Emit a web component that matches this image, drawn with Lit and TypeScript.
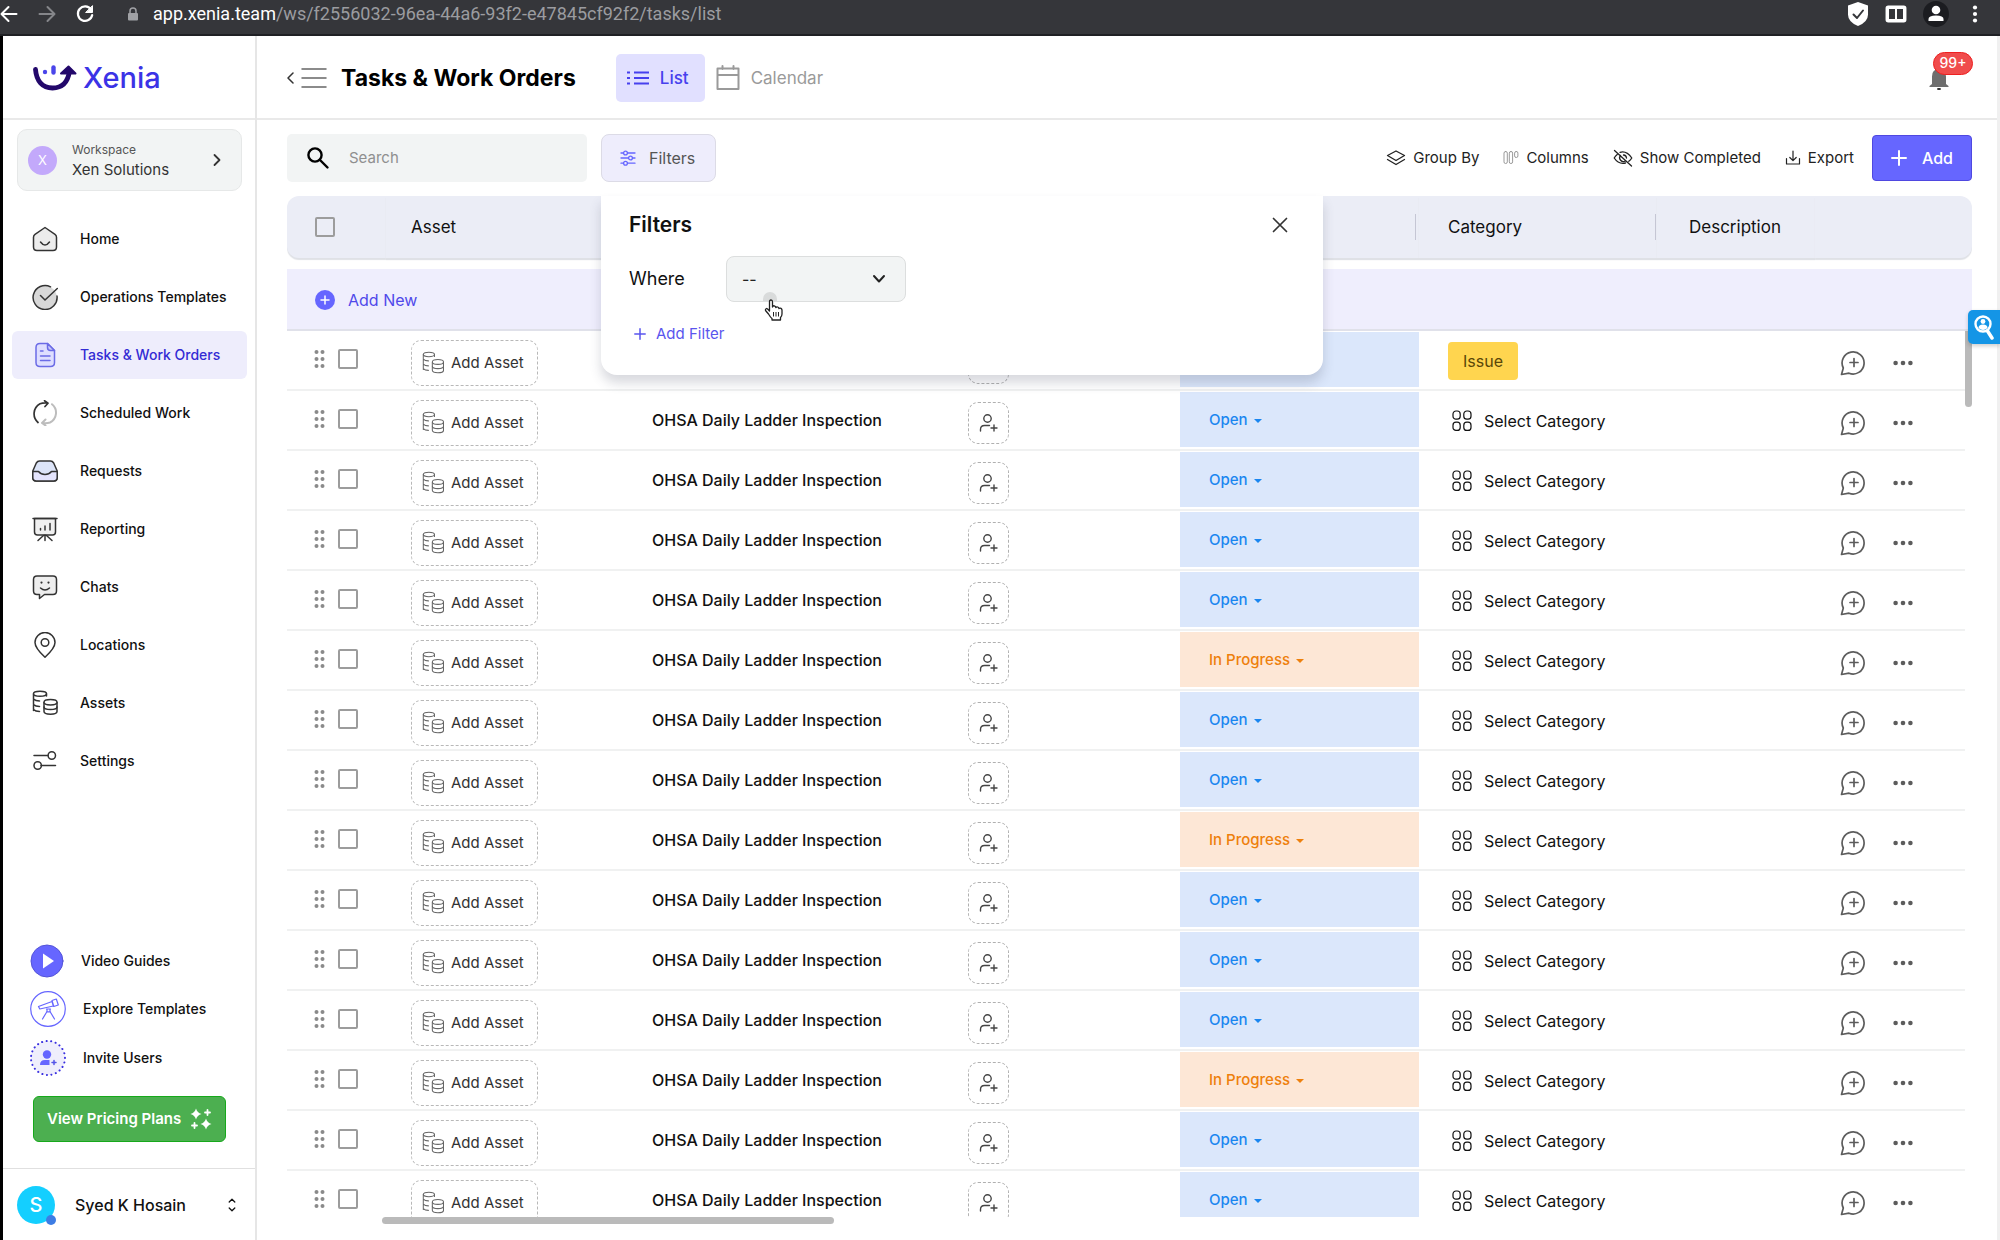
import { LitElement, html, css, svg, nothing, TemplateResult, SVGTemplateResult } from "lit";
import { customElement, property } from "lit/decorators.js";
import { classMap } from "lit/directives/class-map.js";

/* Stroke icon helper: width, height, content drawn in a box of the same size. */
const icon = (w: number, h: number, body: SVGTemplateResult, sw = 1.5) => html`
  <svg class="icon" width=${w} height=${h} viewBox="0 0 ${w} ${h}" fill="none" stroke="currentColor" stroke-width=${sw}
    stroke-linecap="round" stroke-linejoin="round" aria-hidden="true">${body}</svg>`;

const coins = (fill: string) => svg`
  <g fill=${fill}>
    <path fill="none" d="M1.5 4v16.500M1.500 9q2 2 6 2M1.500 14.500q2 2 6 2M1.500 19.500q2 2 6 2"/>
    <ellipse cx="8" cy="3.800" rx="6.500" ry="2.500"/>
    <path d="M12 12.500v9c0 3.600 13 3.600 13 0v-9"/>
    <ellipse cx="18.500" cy="12.200" rx="6.500" ry="2.700"/>
    <path fill="none" d="M12 17c0 3.400 13 3.400 13 0M14.500 4v2"/>
  </g>`;

const icons = {
  home: icon(26, 26, svg`<path fill="#ececec" d="M13 1.500l10 6.800q1.500 1 1.500 3V21q0 3.500-3.500 3.500H5Q1.500 24.500 1.500 21v-9.700q0-2 1.500-3z"/><path d="M8.500 16q4.500 6 9 0"/>`),
  ops: icon(26, 26, svg`<circle cx="13" cy="13.500" r="11.800" fill="#d8d8d8" stroke="none"/><path d="M18.500 2.800A12 12 0 1 0 25 12M8.500 11.500l4.500 4.500L25.300 4.500"/>`),
  tasks: icon(26, 26, svg`<path fill="#dedeff" d="M15.500 1.500H8Q4 1.500 4 5.500v15q0 4 4 4h10.500q4 0 4-4V8.500z"/><path fill="#c8c8fb" d="M15.500 1.500v4q0 3 3 3h4z"/><path d="M8.500 9h2.500M8.500 14h9.500M8.500 18.500h9.500"/>`),
  sched: icon(26, 26, svg`<path stroke-width="1.700" d="M6 22.500A11.500 11.500 0 0 1 8 3.800q3-1.200 8-.8M12.500.8L16 3.200l-3 3.300"/><path stroke="#bdbdbd" stroke-width="2" d="M20 4.200a11 11 0 0 1-2 18.300q-3 1-7.500.5M13.500 19.500L10 23l3.500 2.500"/>`),
  requests: icon(26, 26, svg`<path fill="#dce4f8" d="M7.500 3h11q2 0 3.200 2l3.500 8v6.500q0 3.500-3.500 3.500H4.300Q.8 23 .8 19.500V13l3.500-8q1.200-2 3.200-2z"/><path fill="#e4e4fd" d="M.8 13.500h5.700q2.500 3 6.500 3t6.500-3h5.700v6q0 3.500-3.500 3.500H4.300Q.8 23 .8 19.500z"/>`),
  reporting: icon(26, 26, svg`<path fill="#f0f0f0" d="M2.500 2.500V16q0 3 3 3h15q3 0 3-3V2.500z"/><path d="M1 2.500h24M8.500 12.500v1.500M13 10v4M18 7.500V14M13 19v5.500M11.500 19.500L6 24.500M14.500 19.500l5.500 5"/>`),
  chats: icon(26, 26, svg`<path fill="#eeeeee" d="M5 2h16q3.500 0 3.500 3.500V17q0 3.500-3.500 3.500h-8.500L7.500 24.500V20.500H5q-3.500 0-3.500-3.500V5.500Q1.500 2 5 2z"/><path d="M8.500 14q4.500 4 9 0"/><path stroke-width="2.200" d="M9.500 8.500v.1M16.500 8.500v.1"/>`),
  locations: icon(26, 26, svg`<path d="M13 25.300Q3 16 3 10.500a10 10 0 0 1 20 0Q23 16 13 25.300z"/><circle cx="13" cy="10.500" r="3.800"/>`),
  assets: icon(26, 26, coins("#ffffff")),
  settings: icon(26, 26, svg`<path d="M2 7.500h14M9 17.500h14.500"/><circle cx="19.800" cy="7.500" r="3.700"/><circle cx="5.700" cy="17.500" r="3.700"/>`),
  burger: icon(26, 22, svg`<path d="M1 2h24M1 11h24M1 20h24"/>`),
  back: icon(8, 14, svg`<path d="M7 2L2 7l5 5"/>`),
  list: icon(22, 16, svg`<path d="M7 2.500h15M7 8h15M7 13.500h15" stroke-linecap="butt"/><path stroke-linecap="butt" d="M0 2.500h3M0 8h3M0 13.500h3"/>`, 2),
  calendar: icon(24, 26, svg`<path d="M1.500 3.500h21v20.500h-21zM1.500 10h21M6.500 1v3M17.500 1v3"/>`, 2),
  search: icon(24, 24, svg`<circle cx="9" cy="9" r="6.600"/><path d="M14 14l7.500 7.500"/>`, 2.4),
  filter: icon(16, 16, svg`<path d="M1 3h2.500M7.500 3H15M1 8h7.500M12.500 8H15M1 13.200h2.500M7.500 13.200H15"/><circle cx="5.500" cy="3" r="1.900"/><circle cx="10.500" cy="8" r="1.900"/><circle cx="5.500" cy="13.200" r="1.900"/>`, 1.3),
  layers: icon(20, 18, svg`<path d="M10 2l8.500 4.500L10 11.500 1.500 6.500zM1.500 10.500L10 15.500l8.500-5"/>`, 1.3),
  columns: icon(16, 16, svg`<rect x="1" y="1.500" width="3.300" height="12" rx="1.600"/><rect x="6.300" y="1.500" width="3.300" height="12" rx="1.600"/><rect x="11.600" y="1.500" width="3.300" height="6" rx="1.600"/>`, 1),
  eyeOff: icon(20, 18, svg`<path d="M7 3.300q6.500-2 11.800 5.700-1.300 2-3 3.300M12.500 14Q5.500 15.500 1.200 9q1.200-2 3-3.500M7.500 6.500a3.700 3.700 0 0 0 4.800 5.500M10.500 6q2.800.3 3 3M1.500 1.500l17 15.500"/>`, 1.3),
  export: icon(16, 16, svg`<path d="M8 1v9.500M4.800 7.500L8 10.700l3.200-3.200M1.500 8.500V14h13V8.500"/>`, 1.2),
  plus: icon(16, 16, svg`<path d="M8 1v14M1 8h14"/>`, 2),
  plusSmall: icon(12, 12, svg`<path d="M6 .8v10.400M.8 6h10.400"/>`, 1.5),
  close: icon(18, 18, svg`<path d="M2.500 2.500l13 13M15.500 2.500l-13 13"/>`, 1.7),
  chevDown: icon(14, 10, svg`<path d="M2 2l5 5.500L12 2"/>`, 2),
  chevRight: icon(10, 14, svg`<path d="M2.500 2l5 5-5 5"/>`, 1.8),
  updown: icon(8, 14, svg`<path d="M1.200 4L4 1.200 6.800 4M1.200 10L4 12.800 6.800 10"/>`, 1.3),
  drag: icon(12, 20, svg`<g fill="currentColor" stroke="none"><circle cx="2.500" cy="3" r="2"/><circle cx="8.500" cy="3" r="2"/><circle cx="2.500" cy="10" r="2"/><circle cx="8.500" cy="10" r="2"/><circle cx="2.500" cy="17" r="2"/><circle cx="8.500" cy="17" r="2"/></g>`),
  coinsRow: icon(22, 24, svg`<g transform="scale(.86 .9)">${coins("none")}</g>`, 1.2),
  person: icon(20, 20, svg`<circle cx="8.500" cy="5.500" r="3.700"/><path d="M1.500 18v-1.500q0-4 4-4h5M15 12v6M12 15h6"/>`, 1.4),
  grid: icon(20, 22, svg`<rect x="1" y="1" width="7.200" height="8.200" rx="3"/><rect x="11.800" y="1" width="7.200" height="8.200" rx="3"/><rect x="1" y="12.200" width="7.200" height="8.200" rx="3"/><rect x="11.800" y="12.200" width="7.200" height="8.200" rx="3"/>`, 1.2),
  comment: icon(26, 26, svg`<path d="M1.500 24.500L3.300 18A11 11 0 1 1 9 23.200z"/><path d="M14 8.500v8M10 12.500h8"/>`, 1.7),
  dots: icon(20, 6, svg`<g fill="currentColor" stroke="none"><circle cx="2.600" cy="3" r="2.300"/><circle cx="10" cy="3" r="2.300"/><circle cx="17.400" cy="3" r="2.300"/></g>`),
  sparkle: icon(22, 22, svg`<g fill="currentColor" stroke="none"><path d="M6 .5q1.200 4.300 5.500 5.500Q7.200 7.200 6 11.500 4.800 7.200.5 6 4.800 4.800 6 .5zM16 10.500q1.200 4.300 5.500 5.500-4.300 1.200-5.500 5.500-1.200-4.300-5.500-5.500 4.300-1.200 5.500-5.500z"/></g><path d="M17.500 2v5M15 4.500h5M4.500 15v5M2 17.500h5"/>`, 1.8),
  bell: icon(20, 22, svg`<path fill="currentColor" stroke="none" d="M3 16V8.500Q3 1 10 1t7 7.500V16l2.500 2v1H.5v-1z"/><path stroke="#333" stroke-width="1.800" d="M9 21h2"/>`),
  addCircle: icon(20, 20, svg`<circle cx="10" cy="10" r="10" fill="#6666ff" stroke="none"/><path stroke="#fff" d="M10 6v8M6 10h8"/>`),
  play: icon(34, 34, svg`<circle cx="17" cy="17" r="16" fill="#6666ff" stroke="#5555d8"/><path fill="#fff" stroke="none" d="M13 9.500v15l11-7.500z"/>`, 1),
  scope: icon(36, 36, svg`<g stroke="#6666ff"><circle cx="18" cy="18" r="17.300"/><path d="M8.500 15.500l13.500-5 1.300 4.500-13.500 3zM22 9.500l4.300-1.500 2 6-4.500 1.500zM16.500 18h4M17 18.500v2M20 18v2.500M17 20.500L12.500 28M20 20.500L24.500 28M16.500 20.800h4"/></g>`, 1.2),
  invite: icon(36, 36, svg`<circle cx="18" cy="18" r="17" fill="#efeefc" stroke="#3a30e0" stroke-width="2" stroke-dasharray="0.100 4.500"/><g fill="#6666ff" stroke="none"><circle cx="17" cy="14.500" r="4.200"/><path d="M10 25q0-5 5-5h4.500v5z"/></g><path stroke="#5555e8" stroke-width="1.500" d="M24 20.500v4M22 22.500h4"/>`),
};

const nav: [string, TemplateResult][] = [
  ["Home", icons.home],
  ["Operations Templates", icons.ops],
  ["Tasks & Work Orders", icons.tasks],
  ["Scheduled Work", icons.sched],
  ["Requests", icons.requests],
  ["Reporting", icons.reporting],
  ["Chats", icons.chats],
  ["Locations", icons.locations],
  ["Assets", icons.assets],
  ["Settings", icons.settings],
];

type Row = { title: string; status: string; issue?: boolean };
const inProgress = new Set([5, 8, 12]);
const rows: Row[] = Array.from({ length: 15 }, (_, i) => ({
  title: i ? "OHSA Daily Ladder Inspection" : "",
  status: i ? (inProgress.has(i) ? "In Progress" : "Open") : "",
  issue: i === 0,
}));

const reset = css`
  * { box-sizing: border-box; }
  button, input, select { font: inherit; color: inherit; margin: 0; }
  button { background: none; border: 0; padding: 0; cursor: pointer; display: flex; align-items: center; text-align: left; }
  a { color: inherit; text-decoration: none; }
  .icon { display: block; flex: none; }
`;

@customElement("browser-bar")
export class BrowserBar extends LitElement {
  static styles = [reset, css`
    :host { display: flex; align-items: center; justify-content: space-between; height: 36px; padding: 0 15px 6px 0;
      background: #35363a; border-bottom: 2px solid #1f2024; color: #fff; font: 18px/20px Roboto, sans-serif; }
    .left { display: flex; align-items: center; gap: 20px; }
    .url { display: flex; align-items: center; gap: 14px; margin-left: 13px; }
    .path { color: #9b9ca0; }
    .right { display: flex; align-items: center; gap: 16px; }
  `];
  render() {
    return html`
      <div class="left">
        <button aria-label="Back">${icon(18, 18, svg`<path d="M16.500 9H2M8.500 2L1.500 9l7 7"/>`, 2)}</button>
        <button aria-label="Forward">${icon(18, 18, svg`<path stroke="#85868a" d="M1.500 9H16M9.500 2l7 7-7 7"/>`, 2)}</button>
        <button aria-label="Reload">${icon(18, 18, svg`<path d="M15 4.500A7.200 7.200 0 1 0 16.200 10"/><path fill="#fff" stroke-width="1" d="M16.500 1v6.500H10z"/>`, 2.2)}</button>
        <div class="url">
          ${icon(12, 14, svg`<rect x="1" y="6" width="10" height="7.500" rx="1" fill="#a0a1a5" stroke="none"/><path stroke="#a0a1a5" d="M3 6V4a3 3 0 0 1 6 0v2"/>`)}
          <span>app.xenia.team<span class="path">/ws/f2556032-96ea-44a6-93f2-e47845cf92f2/tasks/list</span></span>
        </div>
      </div>
      <div class="right">
        ${icon(22, 24, svg`<path fill="#fff" stroke="none" d="M11 0l10 3.500v9q0 7.500-10 11.500Q1 20 1 12.500v-9z"/><path stroke="#35363a" stroke-width="2" d="M6.500 12.500l3.500 3.500 6-7.500"/>`)}
        ${icon(22, 18, svg`<rect x="1.300" y="1.300" width="19.400" height="15.400" rx="2" fill="#fff" stroke-width="1.500"/><path fill="#35363a" stroke="none" d="M4 4h6v10H4zM12 4h6v10h-6z"/>`)}
        ${icon(26, 26, svg`<circle cx="13" cy="13" r="13" fill="#1b1c20" stroke="none"/><g fill="#fff" stroke="none"><circle cx="13" cy="9" r="4.300"/><path d="M5.500 20v-2q0-3.500 7.500-3.500t7.500 3.500v2z"/></g>`)}
        ${icon(20, 20, svg`<g fill="#fff" stroke="none"><circle cx="10" cy="3.500" r="2.100"/><circle cx="10" cy="10" r="2.100"/><circle cx="10" cy="16.500" r="2.100"/></g>`)}
      </div>`;
  }
}

@customElement("side-bar")
export class SideBar extends LitElement {
  static styles = [reset, css`
    :host { display: flex; flex-direction: column; width: 257px; flex: none; border-left: 3px solid #000;
      border-right: 2px solid #e6e6e6; background: #fff; font-weight: 500; font-size: 14px; line-height: 20px; }
    .logo { height: 84px; padding: 2px 0 0 30px; display: flex; align-items: center; gap: 6px; border-bottom: 2px solid #e9e9e9;
      color: #3b33e6; font-size: 29px; line-height: 36px; font-weight: 500; }
    .workspace { margin: 9px 13px 0 14px; height: 62px; padding: 0 19px 0 10px; border: 1px solid #e6e8e8; border-radius: 10px;
      background: #f2f4f4; color: #333; font-weight: 400; gap: 15px; }
    .ws-avatar { width: 29px; height: 29px; border-radius: 50%; background: #c3a9fb; color: #fff; display: grid; place-items: center; font-size: 13px; }
    .ws-text { flex: 1; display: flex; flex-direction: column; font-size: 15px; line-height: 20px; }
    .ws-text small { font-size: 12px; line-height: 20px; color: #555; }
    nav { display: flex; flex-direction: column; gap: 10px; margin: 24px 8px 0 9px; }
    nav a { display: flex; align-items: center; gap: 22px; height: 48px; padding-left: 20px; border-radius: 6px; color: #111; }
    nav svg { color: #333; }
    nav a.active { background: #eeedfc; color: #332bd4; }
    nav a.active svg { color: #6b6be6; }
    .links { margin-top: auto; padding: 0 27px; display: flex; flex-direction: column; gap: 13px; color: #111; }
    .links button { gap: 17px; }
    .pricing { margin: 20px 29px 26px 30px; height: 46px; justify-content: space-between; padding: 0 13px; border-radius: 6px; background: #4caf50;
      border: 1px solid #16a91b; color: #fff; font-size: 15px; font-weight: 600; }
    .user { border-top: 1px solid #e0e0e0; height: 72px; padding: 0 19px 0 14px; gap: 20px; font-size: 16px; color: #111; }
    .avatar { position: relative; width: 38px; height: 38px; border-radius: 50%; background: #14cfff; color: #fff;
      display: grid; place-items: center; font-size: 20px; font-weight: 500; }
    .avatar i { position: absolute; right: -1px; bottom: -1px; width: 10px; height: 10px; border-radius: 50%; background: #3d7de4; }
    .name { flex: 1; }
  `];
  render() {
    return html`
      <div class="logo">
        <svg width="44" height="28" viewBox="0 0 44 28" fill="none" stroke-linecap="round" aria-hidden="true">
          <path d="M2.500 5.500C3.500 17 9.500 24 19.500 24S35 17.500 36.500 7" stroke="#23086b" stroke-width="4.800"/>
          <path d="M28 9.500L35.500 2.500 42.500 9.500z" fill="#23086b" stroke="#23086b" stroke-width="2" stroke-linejoin="round"/>
          <circle cx="12" cy="8" r="2.200" fill="#4a45ea"/>
          <path d="M20.500 3.500v5" stroke="#4a45ea" stroke-width="4.400"/>
        </svg>
        <span>Xenia</span>
      </div>
      <button class="workspace">
        <span class="ws-avatar">X</span>
        <span class="ws-text"><small>Workspace</small>Xen Solutions</span>
        ${icons.chevRight}
      </button>
      <nav>
        ${nav.map(([label, ic]) => html`<a href="#" class=${classMap({ active: label.startsWith("Tasks") })}>${ic}${label}</a>`)}
      </nav>
      <div class="links">
        <button>${icons.play}Video Guides</button>
        <button>${icons.scope}Explore Templates</button>
        <button>${icons.invite}Invite Users</button>
      </div>
      <button class="pricing">View Pricing Plans ${icons.sparkle}</button>
      <button class="user">
        <span class="avatar">S<i></i></span>
        <span class="name">Syed K Hosain</span>
        ${icons.updown}
      </button>`;
  }
}

@customElement("filter-panel")
export class FilterPanel extends LitElement {
  static styles = [reset, css`
    :host { display: block; background: #fff; border-radius: 0 0 16px 16px; padding: 14px 28px 31px; color: #111;
      box-shadow: 0 8px 12px rgba(60, 64, 90, .2); font-size: 18px; font-weight: 400; }
    .head { display: flex; justify-content: space-between; align-items: center; padding-right: 6px; height: 30px; }
    h2 { margin: 0; font-size: 21px; line-height: 30px; font-weight: 600; }
    .head button { color: #333; }
    .where { display: flex; align-items: center; margin-top: 16px; }
    label { width: 97px; }
    .pick { position: relative; width: 180px; color: #222; }
    select { width: 100%; height: 46px; appearance: none; border: 1px solid #dcdede; border-radius: 8px; background: #f2f4f4; padding: 0 15px; font-size: 16px; }
    .pick svg { position: absolute; right: 20px; top: 18px; pointer-events: none; }
    .add { color: #5a55ee; font-size: 15px; line-height: 20px; gap: 10px; margin: 22px 0 0 5px; }
    .touch { position: absolute; left: 162px; top: 96px; width: 14px; height: 9px; border-radius: 7px 7px 0 0; background: #d9dbdb; }
    .hand { position: absolute; left: 163px; top: 103px; }
  `];
  render() {
    return html`
      <div class="head"><h2>Filters</h2><button aria-label="Close">${icons.close}</button></div>
      <div class="where">
        <label for="field">Where</label>
        <div class="pick"><select id="field"><option>--</option></select>${icons.chevDown}</div>
      </div>
      <button class="add">${icons.plusSmall} Add Filter</button>
      <span class="touch"></span>
      <svg class="hand" width="20" height="22" viewBox="0 0 20 22" fill="#fff" stroke="#222" stroke-width="1.300" stroke-linejoin="round" aria-hidden="true">
        <path d="M5.500 12V3Q5.500 1 7 1t1.500 2v5q.5-1.500 1.800-1.200T11.800 8.500q.8-1 1.900-.5T15 9.500q2.500-1 3 1.500v4q0 2-1.500 3.500V21H8v-1.500Q6.500 18.500 4.500 15L1.500 11.500Q1 10 2.500 9.500q1 0 3 2.500z"/>
        <path fill="none" stroke-width="1" d="M9.500 13v4.500M12 13v4.500M14.500 13v4.500"/>
      </svg>`;
  }
}

@customElement("work-table")
export class WorkTable extends LitElement {
  @property({ attribute: false }) rows: Row[] = [];
  static styles = [reset, css`
    :host { display: block; position: relative; overflow: hidden; color: #111; }
    table { width: 100%; table-layout: fixed; border-collapse: separate; border-spacing: 0; font-size: 16px; line-height: 20px; font-weight: 500; }
    th, td { padding: 0; text-align: left; }
    th { height: 62px; background: #ebedf6; font-size: 17px; font-weight: 400; box-shadow: 0 2px 1px #dfe1e6; padding-left: 25px; }
    th:first-child { border-radius: 12px 0 0 12px; padding-left: 28px; }
    th:last-child { border-radius: 0 12px 12px 0; }
    .sep { display: flex; align-items: center; justify-content: space-between; }
    .sep::after { content: ""; width: 1px; height: 26px; background: #c5c6d4; margin-right: 3px; }
    .cat .sep::after { margin-right: 1px; }
    .c-check { width: 99px; } .c-asset { width: 241px; } .c-name { width: 316px; } .c-who { width: 237px; }
    .c-status { width: 239px; } .c-cat { width: 238px; } .c-act { width: 157px; }
    th.cat { padding-left: 29px; }
    th.desc { padding-left: 32px; }
    .gap td { height: 11px; }
    .new td { height: 62px; background: #efeefd; border-bottom: 2px solid #e0e1ea; padding: 1px 0 0 28px; }
    .new button { gap: 13px; color: #4f49ea; font-weight: 400; }
    .row td { height: 60px; border-bottom: 2px solid #f0f1f1; padding-left: 25px; }
    .row .sel { padding: 0 0 3px 27px; }
    .pair { display: flex; align-items: center; gap: 12px; color: #8a8a8a; }
    input { appearance: none; display: block; width: 20px; height: 20px; border: 2px solid #9c9c9c; border-radius: 2px; background: #fff; }
    th input { background: transparent; }
    .low { padding-top: 5px; }
    .asset { width: 127px; height: 46px; gap: 7px; padding-left: 10px; border: 1px dashed #b8b8b8; border-radius: 10px; color: #333; font-size: 15px; font-weight: 400; }
    .asset svg { color: #666; }
    .who { width: 41px; height: 42px; justify-content: center; border: 1px dashed #b0b0b0; border-radius: 10px; color: #444; }
    .row .status { padding: 0; vertical-align: top; }
    .status button { width: 100%; height: 55px; margin-top: 1px; padding-left: 29px; gap: 6px; background: #dbe7fb; color: #1a86f0; font-size: 15px; font-weight: 500; }
    .status button.progress { background: #fde7d6; color: #ee800c; }
    .caret { border: 4px solid transparent; border-top-color: currentColor; border-bottom: 0; margin-top: 2px; }
    .row .cat { padding: 2px 0 0 29px; }
    .cat button { gap: 12px; padding-left: 4px; font-weight: 400; }
    .row .cat .issue { background: #ffd54f; color: #5a4708; height: 38px; padding: 0 15px; border-radius: 4px; }
    .row .act { padding: 6px 0 0 25px; }
    .act div { display: flex; align-items: center; gap: 27px; color: #5c5c5c; }
    .track { position: absolute; right: 0; top: 135px; bottom: 0; width: 7px; background: #fff; }
    .thumb { height: 76px; background: #bababa; border-radius: 0 0 4px 4px; }
  `];
  render() {
    return html`
      <table>
        <colgroup><col class="c-check" /><col class="c-asset" /><col class="c-name" /><col class="c-who" /><col class="c-status" /><col class="c-cat" /><col /><col class="c-act" /></colgroup>
        <thead><tr>
          <th><input type="checkbox" aria-label="Select all" /></th><th>Asset</th><th></th><th></th>
          <th><div class="sep"><span></span></div></th>
          <th class="cat"><div class="sep">Category</div></th><th class="desc">Description</th><th></th>
        </tr></thead>
        <tbody>
          <tr class="gap"><td colspan="8"></td></tr>
          <tr class="new"><td colspan="8"><button>${icons.addCircle} Add New</button></td></tr>
          ${this.rows.map((r) => html`<tr class="row">
            <td class="sel"><div class="pair">${icons.drag}<input type="checkbox" aria-label="Select row" /></div></td>
            <td class="low"><button class="asset">${icons.coinsRow} Add Asset</button></td>
            <td>${r.title}</td>
            <td class="low"><button class="who" aria-label="Assign">${icons.person}</button></td>
            <td class="status"><button aria-label=${r.status || "Status"} class=${classMap({ progress: r.status === "In Progress" })}>${r.status ? html`${r.status}<i class="caret"></i>` : nothing}</button></td>
            <td class="cat">${r.issue ? html`<button class="issue">Issue</button>` : html`<button>${icons.grid} Select Category</button>`}</td>
            <td></td>
            <td class="act"><div><button aria-label="Comment">${icons.comment}</button><button aria-label="More">${icons.dots}</button></div></td>
          </tr>`)}
        </tbody>
      </table>
      <div class="track"><div class="thumb"></div></div>`;
  }
}

@customElement("app-root")
export class AppRoot extends LitElement {
  static styles = [reset, css`
    :host { display: flex; flex-direction: column; height: 100vh; overflow: hidden; background: #fff; color: #222;
      font: 400 15px/20px Inter, "Liberation Sans", sans-serif; }
    .body { flex: 1; min-height: 0; display: flex; position: relative; }
    main { flex: 1; min-width: 0; display: flex; flex-direction: column; border-right: 3px solid #f0f0f0; }
    header { height: 84px; flex: none; display: flex; align-items: center; padding: 2px 24px 0 29px; border-bottom: 2px solid #e9e9e9; }
    .back { gap: 7px; color: #333; }
    .back svg + svg { color: #666; }
    h1 { margin: 0 40px 0 14px; font-size: 23px; line-height: 30px; font-weight: 700; color: #000; }
    .tab { height: 48px; padding: 0 16px 0 11px; gap: 11px; border-radius: 5px; font-size: 17px; color: #9a9a9a; font-weight: 400; }
    .tab.on { background: #e1e0ff; color: #4740ee; font-weight: 500; }
    .bell { position: relative; margin: 2px 24px 0 auto; color: #6e6e6e; }
    .badge { position: absolute; left: 4px; top: -16px; width: 40px; height: 23px; border-radius: 12px; background: #f04c4c; border: 1px solid #ee2020;
      color: #fff; font-size: 14px; line-height: 20px; text-align: center; font-weight: 500; }
    .tools { display: flex; align-items: center; padding: 14px 25px 14px 30px; color: #222; }
    .search { display: flex; align-items: center; width: 300px; height: 48px; padding: 0 20px 0 19px; gap: 19px; border-radius: 5px; background: #f2f4f4; color: #000; }
    .search input { border: 0; background: none; width: 100%; min-width: 0; padding: 0; color: #333; font-weight: 400; outline: 0; }
    .search input::placeholder { color: #8f8f8f; opacity: 1; }
    .filters { position: relative; z-index: 2; margin-left: 14px; }
    .filters > button { height: 48px; width: 115px; padding-left: 18px; gap: 13px; border: 1px solid #dcdbe6; border-radius: 8px; background: #eeedfc; color: #555; font-size: 16px; }
    .filters > button svg { color: #6666ff; }
    filter-panel { position: absolute; left: 0; top: 62px; width: 722px; }
    .actions { margin-left: auto; display: flex; align-items: center; gap: 24px; }
    .actions button { gap: 7px; }
    .pale { color: #999; }
    .actions .add { width: 100px; height: 46px; justify-content: center; gap: 15px; border-radius: 4px; background: #6666ff; border: 1px solid #4f48e0; color: #fff; margin-left: -6px; font-size: 16px; font-weight: 500; }
    work-table { flex: 1; min-height: 0; margin: 0 25px 0 30px; }
    .foot { height: 23px; flex: none; padding-left: 125px; display: flex; }
    .bar { width: 452px; height: 7px; border-radius: 4px; background: #bababa; }
    .finder { position: absolute; right: 0; top: 274px; width: 32px; height: 34px; justify-content: center; border-radius: 5px 0 0 5px;
      background: #1495e6; color: #fff; box-shadow: 0 2px 4px rgba(0, 0, 0, .2); }
  `];
  render() {
    return html`
      <browser-bar></browser-bar>
      <div class="body">
        <side-bar></side-bar>
        <main>
          <header>
            <button class="back" aria-label="Toggle menu">${icons.back}${icons.burger}</button>
            <h1>Tasks &amp; Work Orders</h1>
            <button class="tab on">${icons.list} List</button>
            <button class="tab">${icons.calendar} Calendar</button>
            <button class="bell" aria-label="Notifications">${icons.bell}<span class="badge">99+</span></button>
          </header>
          <div class="tools">
            <div class="search">${icons.search}<input type="search" placeholder="Search" aria-label="Search" /></div>
            <div class="filters">
              <button>${icons.filter} Filters</button>
              <filter-panel></filter-panel>
            </div>
            <div class="actions">
              <button>${icons.layers} Group By</button>
              <button><span class="pale">${icons.columns}</span> Columns</button>
              <button>${icons.eyeOff} Show Completed</button>
              <button>${icons.export} Export</button>
              <button class="add">${icons.plus} Add</button>
            </div>
          </div>
          <work-table .rows=${rows}></work-table>
          <div class="foot"><div class="bar"></div></div>
        </main>
        <button class="finder" aria-label="Find">${icon(20, 28, svg`<circle cx="9" cy="11" r="7.500"/><path stroke-width="3.500" d="M13.500 18l4.500 7"/><g fill="#fff" stroke="none"><circle cx="9" cy="8.500" r="2.400"/><path d="M4.500 15q0-3.500 4.500-3.500t4.500 3.500q-2 2-4.500 2T4.500 15z"/></g>`, 2.4)}</button>
      </div>`;
  }
}
